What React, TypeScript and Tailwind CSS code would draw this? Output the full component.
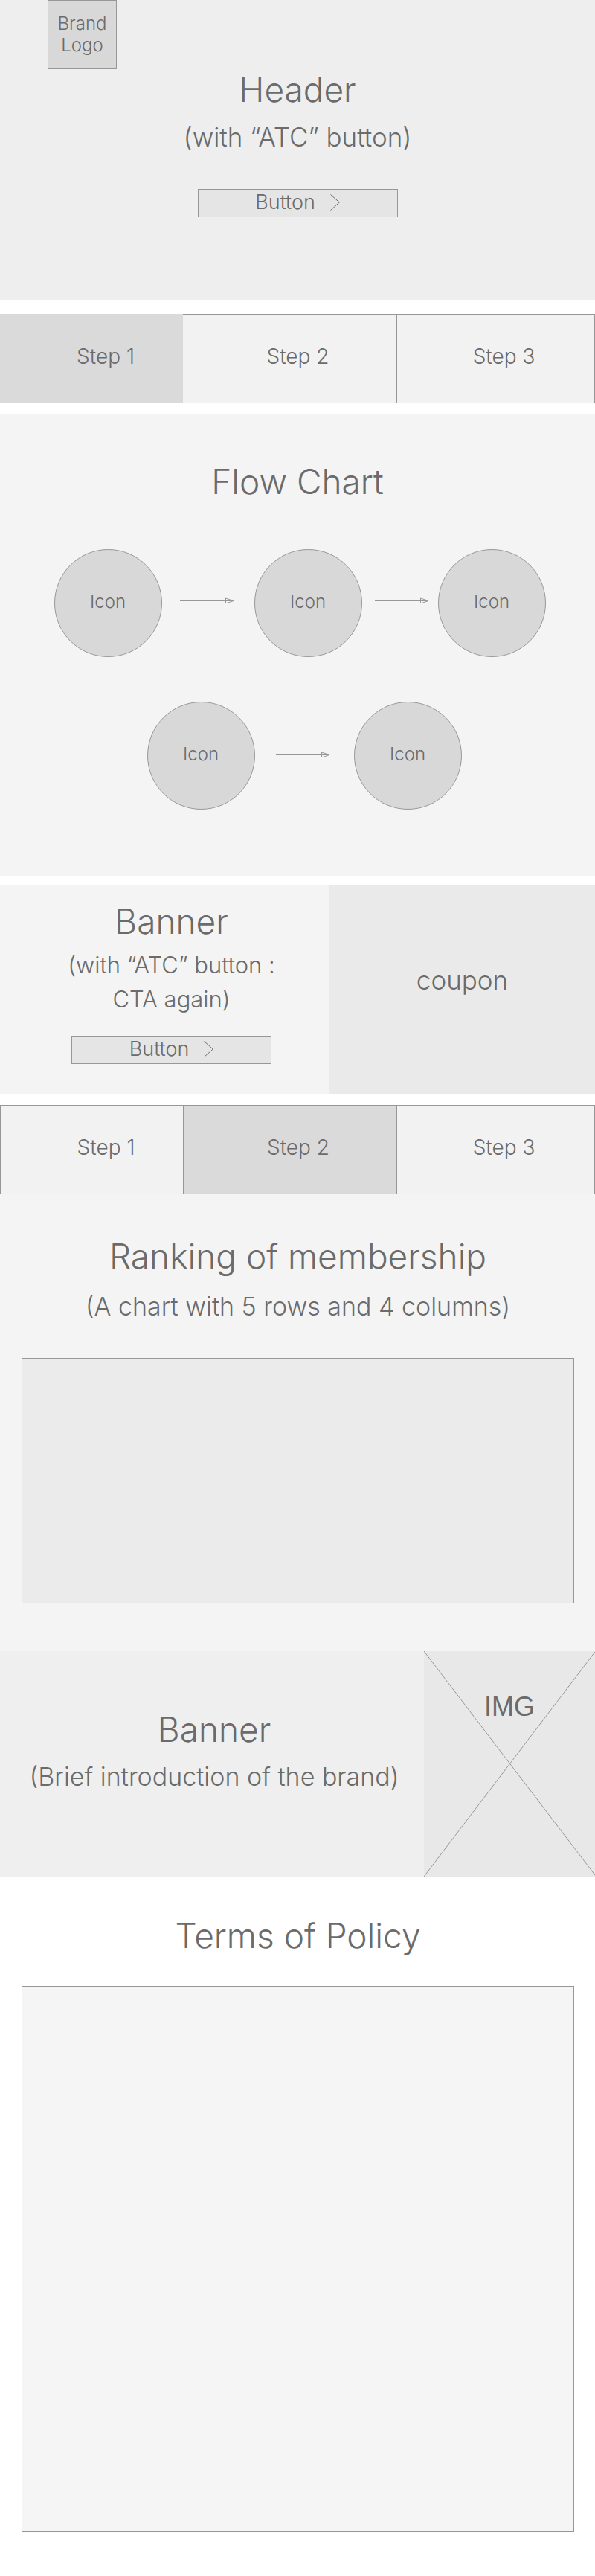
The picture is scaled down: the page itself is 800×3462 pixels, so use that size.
import React from "react";

const title = "text-[46px] leading-[54px] font-light text-center";
const subtitle = "text-[35px] leading-[40px] font-light text-center";
const longSubtitle = "text-[34px] leading-[40px] font-light text-center";

function Arrow({ className = "" }: { className?: string }) {
  return (
    <svg
      className={"h-2 w-[73px] shrink-0 " + className}
      viewBox="0 0 73 8"
      fill="none"
      stroke="#979797"
      aria-hidden="true"
    >
      <path d="M0 4.5H72M61.500 1L72 4.500L61.500 8Z" />
    </svg>
  );
}

function IconCircle() {
  return (
    <div className="flex size-[145px] shrink-0 items-center justify-center rounded-full border border-[#979797] bg-[#d8d8d8] pb-1 text-[24px] leading-7 font-light">
      Icon
    </div>
  );
}

function ActionButton({ className = "" }: { className?: string }) {
  return (
    <button
      type="button"
      className={
        "flex h-[38px] w-[269px] items-center justify-center gap-5 border border-[#979797] bg-[#e5e5e5] pb-0.5 text-[27px] leading-8 font-light " +
        className
      }
    >
      Button
      <svg className="h-[22px] w-[13px]" viewBox="0 0 13 22" fill="none" stroke="#6b6b6b" aria-hidden="true">
        <path d="M0.500 0.500L12.300 11L0.500 21.500" />
      </svg>
    </button>
  );
}

function Steps({ active, className = "" }: { active: number; className?: string }) {
  const edges = [
    active === 1 ? "border-[#dadada] pl-[38px]" : "border-l border-[#979797] pl-[38px]",
    active === 1 ? "border-[#979797] pl-[22px]" : "border-l border-[#979797] pl-[22px]",
    "border-x border-[#979797] pl-[22px]",
  ];
  return (
    <nav aria-label="Steps" className={"grid grid-cols-[246fr_287fr_267fr] " + className}>
      {edges.map((edge, i) => (
        <button
          key={i}
          type="button"
          aria-current={active === i + 1 ? "step" : undefined}
          className={
            "flex h-[120px] items-center justify-center border-y pb-1.5 text-[28px] leading-8 font-light " +
            edge +
            (active === i + 1 ? " bg-[#dadada]" : " bg-[#f2f2f2]")
          }
        >
          Step {i + 1}
        </button>
      ))}
    </nav>
  );
}

export default function App() {
  return (
    <div className="bg-white font-[Inter,'Liberation_Sans',sans-serif] text-[#6b6b6b]">
      <header className="flex flex-col items-center bg-[#eeeeee] pb-[111px]">
        <div className="ml-16 flex size-[93px] flex-col justify-center self-start border border-[#979797] bg-[#d8d8d8] pb-0.5 text-center text-[24px] leading-[29px] font-light">
          <span>Brand</span>
          <span>Logo</span>
        </div>
        <h1 className={title}>Header</h1>
        <p className={subtitle + " mt-[17px]"}>(with “ATC” button)</p>
        <ActionButton className="mt-[50px]" />
      </header>

      <Steps active={1} className="mt-[19px]" />

      <section className="mt-[15px] bg-[#f4f4f4] pt-[63px] pb-[89px]">
        <h2 className={title}>Flow Chart</h2>
        <div className="mt-16 flex items-center justify-center pl-1.5">
          <IconCircle />
          <Arrow className="mr-[27px] mb-[7px] ml-6" />
          <IconCircle />
          <Arrow className="mr-3 mb-[7px] ml-[17px]" />
          <IconCircle />
        </div>
        <div className="mt-[60px] flex items-center justify-center pl-[18px]">
          <IconCircle />
          <Arrow className="mr-8 mb-1 ml-7" />
          <IconCircle />
        </div>
      </section>

      <section className="mt-[13px] grid grid-cols-[443fr_357fr]">
        <div className="flex flex-col items-center bg-[#f4f4f4] pt-[21px] pb-10 pl-[18px]">
          <h2 className={title}>Banner</h2>
          <p className="mt-[9px] text-center text-[31px] leading-[46px] font-light">
            (with “ATC” button :<br />
            CTA again)
          </p>
          <ActionButton className="mt-[26px]" />
        </div>
        <div className={subtitle + " flex items-center justify-center bg-[#eaeaea] pb-[26px]"}>coupon</div>
      </section>

      <Steps active={2} className="mt-[15px]" />

      <section className="bg-[#f4f4f4] pt-14 pr-7 pb-16 pl-[29px]">
        <h2 className={title}>Ranking of membership</h2>
        <p className={longSubtitle + " mt-[21px]"}>(A chart with 5 rows and 4 columns)</p>
        <div className="mt-[49px] h-[330px] border border-[#979797] bg-[#ebebeb]" />
      </section>

      <section className="grid min-h-[303px] grid-cols-[570fr_230fr]">
        <div className="bg-[#efefef] pt-[78px] pl-1.5">
          <h2 className={title}>Banner</h2>
          <p className={longSubtitle + " mt-[17px]"}>(Brief introduction of the brand)</p>
        </div>
        <div className="relative bg-[#e8e8e8] pt-[55px] text-center font-['Liberation_Sans',Arial,sans-serif] text-[36px] leading-10">
          <svg
            className="absolute inset-0 size-full"
            viewBox="0 0 230 303"
            preserveAspectRatio="none"
            stroke="#979797"
            aria-hidden="true"
          >
            <path d="M0 0L230 301M230 1L0 303" />
          </svg>
          IMG
        </div>
      </section>

      <section className="pt-[52px] pr-7 pb-[59px] pl-[29px]">
        <h2 className={title}>Terms of Policy</h2>
        <div className="mt-[41px] h-[734px] border border-[#979797] bg-[#f5f5f5]" />
      </section>
    </div>
  );
}
